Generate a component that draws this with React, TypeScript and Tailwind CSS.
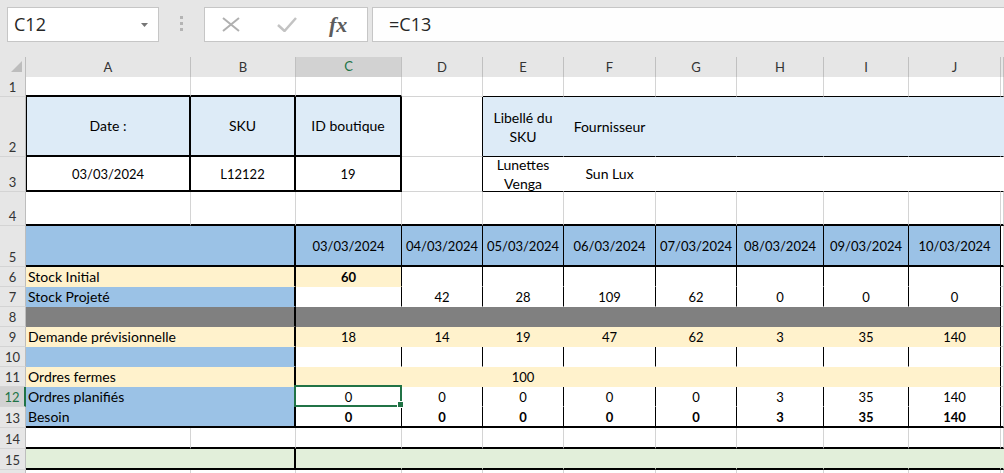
import type { ReactNode } from "react";

const COLS =
  "grid grid-cols-[26px_165px_105px_106px_81px_81px_92px_81px_87px_85px_92px_minmax(0,1fr)]";

const BOT = {
  g: "border-b border-b-[#d4d4d4]",
  k: "border-b border-b-black",
  K: "border-b-2 border-b-black",
  f: "border-b border-b-transparent",
};
const RGT = {
  g: "border-r border-r-[#d4d4d4]",
  k: "border-r border-r-black",
  K: "border-r-2 border-r-black",
  f: "border-r border-r-transparent",
};

type Cell = {
  b: keyof typeof BOT;
  r: keyof typeof RGT;
  bg?: string;
  span?: boolean;
  left?: boolean;
  bold?: boolean;
  wrap?: boolean;
  num?: boolean;
  sel?: boolean;
  x?: string;
  t?: ReactNode;
};

const LB = "bg-[#ddebf7]";
const MB = "bg-[#9bc2e6]";
const YE = "bg-[#fff2cc]";
const GR = "bg-[#808080]";
const GN = "bg-[#e2efda]";

const LETTERS = ["A", "B", "C", "D", "E", "F", "G", "H", "I", "J", ""];
const DATES = [
  "03/03/2024",
  "04/03/2024",
  "05/03/2024",
  "06/03/2024",
  "07/03/2024",
  "08/03/2024",
  "09/03/2024",
  "10/03/2024",
];

// cells C..J of the planning block
function block(
  vals: (string | number | null)[],
  bg: string,
  r: "k" | "f",
  b: "f" | "K" = "f",
  bold = false
): Cell[] {
  return vals.map((v, i) => ({
    b,
    r: i === 7 ? "k" : r,
    bg,
    bold,
    num: true,
    t: v,
  }));
}

const kCell = (b: keyof typeof BOT = "g"): Cell => ({ b, r: "g" });
const blank8 = [null, null, null, null, null, null, null, null];

function Row({
  n,
  h,
  cells,
  mid,
  selected,
}: {
  n?: number;
  h: string;
  cells: Cell[];
  mid?: boolean;
  selected?: boolean;
}) {
  return (
    <div className={`${COLS} ${h}`}>
      <div
        className={`flex items-end justify-center border-b border-b-[#d4d4d4] text-[13px] leading-[18px] ${
          selected
            ? "border-r-2 border-r-[#217346] bg-[#d2d2d2] text-[#217346]"
            : "border-r border-r-[#bdbdbd] bg-[#e6e6e6] text-[#333]"
        }`}
      >
        {n}
      </div>
      {cells.map((c, i) => (
        <div
          key={i}
          className={[
            "relative flex",
            c.sel ? "" : "overflow-hidden",
            mid || c.wrap ? "items-center" : "items-end",
            c.left ? "justify-start pl-[2px]" : "justify-center",
            c.wrap
              ? "whitespace-normal text-center leading-[19px]"
              : "whitespace-nowrap leading-[18px]",
            c.num ? "text-[13px]" : "",
            c.span ? "col-span-2" : "",
            c.bold ? "font-bold" : "",
            BOT[c.b],
            RGT[c.r],
            c.bg ?? "bg-white",
            c.x ?? "",
          ].join(" ")}
        >
          {c.t}
          {c.sel && (
            <>
              <div className="pointer-events-none absolute -top-[2px] -left-[2px] -right-[1px] -bottom-[1px] z-10 border-2 border-[#217346]" />
              <div className="absolute -right-[3px] -bottom-[2px] z-20 h-[7px] w-[7px] border border-white bg-[#217346]" />
            </>
          )}
        </div>
      ))}
    </div>
  );
}

function FormulaBar() {
  return (
    <div className="flex h-[57px] items-start bg-[#e6e6e6] pt-[7px] pl-[7px] font-['Open_Sans',sans-serif]">
      <div className="flex h-[35px] w-[152px] items-center justify-between border border-[#c6c6c6] bg-white pr-[10px] pl-[6px]">
        <span className="text-[18px] text-[#262626]">C12</span>
        <svg width="7" height="4" viewBox="0 0 7 4">
          <path d="M0 0h7L3.5 4z" fill="#767676" />
        </svg>
      </div>
      <div className="flex w-[45px] flex-col items-center gap-[3px] pt-[9px]">
        <span className="h-[3px] w-[3px] bg-[#b4b4b4]" />
        <span className="h-[3px] w-[3px] bg-[#b4b4b4]" />
        <span className="h-[3px] w-[3px] bg-[#b4b4b4]" />
      </div>
      <div className="flex h-[35px] w-[164px] items-center border border-[#c6c6c6] bg-white pl-[17px]">
        <svg width="18" height="15" viewBox="0 0 18 15">
          <path d="M1 1L17 14M17 1L1 14" stroke="#b0b0b0" strokeWidth="2" fill="none" />
        </svg>
        <svg className="ml-[37px]" width="20" height="15" viewBox="0 0 20 15">
          <path d="M1 8l6.5 6L19 1" stroke="#c3c3c3" strokeWidth="2.5" fill="none" />
        </svg>
        <span className="ml-[32px] font-['Liberation_Serif',serif] text-[22px] font-bold italic leading-none text-[#5c5c5c]">
          fx
        </span>
      </div>
      <div className="ml-[4px] flex h-[35px] flex-1 items-center border border-r-0 border-[#c6c6c6] bg-[#fefefe] pl-[16px] text-[18px] text-[#262626]">
        =C13
      </div>
    </div>
  );
}

export default function App() {
  const rest = (b: keyof typeof BOT, r: keyof typeof RGT, bg?: string) =>
    Array.from({ length: 6 }, () => ({ b, r, bg }) as Cell);

  return (
    <div className="h-[473px] w-[1004px] overflow-hidden bg-white font-['Lato',sans-serif] text-[14px] text-black">
      <FormulaBar />

      {/* column headers */}
      <div className={`${COLS} h-[20px] text-[13px]`}>
        <div className="border-r border-b border-r-[#bdbdbd] border-b-[#ababab] bg-[#e6e6e6]">
          <svg width="25" height="19" viewBox="0 0 25 19">
            <polygon points="11,15 22,4 22,15" fill="#bdbdbd" />
          </svg>
        </div>
        {LETTERS.map((l) => (
          <div
            key={l}
            className={`flex items-center justify-center border-r border-r-[#c0c0c0] ${
              l === "C"
                ? "border-b-2 border-b-[#217346] bg-[#d2d2d2] text-[#217346]"
                : "border-b border-b-[#ababab] bg-[#e6e6e6] text-[#333]"
            }`}
          >
            {l}
          </div>
        ))}
      </div>

      <Row
        n={1}
        h="h-[20px]"
        cells={[
          kCell("K"),
          kCell("K"),
          kCell("K"),
          kCell("g"),
          ...Array.from({ length: 7 }, () => kCell("k")),
        ]}
      />

      <Row
        n={2}
        h="h-[60px]"
        mid
        cells={[
          { b: "K", r: "K", bg: LB, x: "border-l border-l-black", t: "Date :" },
          { b: "K", r: "K", bg: LB, t: "SKU" },
          { b: "K", r: "K", bg: LB, t: "ID boutique" },
          { b: "g", r: "k" },
          { b: "k", r: "f", bg: LB, wrap: true, t: "Libellé du SKU" },
          { b: "k", r: "f", bg: LB, t: "Fournisseur" },
          ...rest("k", "f", LB),
        ].slice(0, 11)}
      />

      <Row
        n={3}
        h="h-[35px]"
        mid
        cells={[
          { b: "K", r: "K", num: true, x: "border-l border-l-black", t: "03/03/2024" },
          { b: "K", r: "K", num: true, t: "L12122" },
          { b: "K", r: "K", num: true, t: "19" },
          { b: "g", r: "k" },
          { b: "k", r: "f", wrap: true, t: "Lunettes Venga" },
          { b: "k", r: "f", t: "Sun Lux" },
          ...rest("k", "f"),
        ].slice(0, 11)}
      />

      <Row n={4} h="h-[34px]" cells={Array.from({ length: 11 }, () => kCell("K"))} />

      <Row
        n={5}
        h="h-[41px]"
        mid
        cells={[
          { b: "K", r: "K", bg: MB, span: true },
          ...DATES.map((d) => ({ b: "K", r: "k", bg: MB, num: true, t: d }) as Cell),
          kCell("K"),
        ]}
      />

      <Row
        n={6}
        h="h-[20px]"
        cells={[
          { b: "f", r: "K", bg: YE, span: true, left: true, t: "Stock Initial" },
          { b: "f", r: "k", bg: YE, bold: true, num: true, t: "60" },
          ...block(blank8.slice(1), "bg-white", "k").map((c) => ({
            ...c,
            r: "k" as const,
          })),
          kCell(),
        ]}
      />

      <Row
        n={7}
        h="h-[20px]"
        cells={[
          { b: "f", r: "K", bg: MB, span: true, left: true, t: "Stock Projeté" },
          ...block([null, 42, 28, 109, 62, 0, 0, 0], "bg-white", "k"),
          kCell(),
        ]}
      />

      <Row
        n={8}
        h="h-[20px]"
        cells={[
          { b: "f", r: "K", bg: GR, span: true },
          ...block(blank8, GR, "f"),
          kCell(),
        ]}
      />

      <Row
        n={9}
        h="h-[20px]"
        cells={[
          { b: "f", r: "K", bg: YE, span: true, left: true, t: "Demande prévisionnelle" },
          ...block([18, 14, 19, 47, 62, 3, 35, 140], YE, "f"),
          kCell(),
        ]}
      />

      <Row
        n={10}
        h="h-[20px]"
        cells={[
          { b: "f", r: "K", bg: MB, span: true },
          ...block(blank8, "bg-white", "k"),
          kCell(),
        ]}
      />

      <Row
        n={11}
        h="h-[20px]"
        cells={[
          { b: "f", r: "K", bg: YE, span: true, left: true, t: "Ordres fermes" },
          ...block([null, null, 100, null, null, null, null, null], YE, "f"),
          kCell(),
        ]}
      />

      <Row
        n={12}
        h="h-[20px]"
        selected
        cells={[
          { b: "f", r: "K", bg: MB, span: true, left: true, t: "Ordres planifiés" },
          ...block([0, 0, 0, 0, 0, 3, 35, 140], "bg-white", "k").map((c, i) =>
            i === 0 ? { ...c, sel: true } : c
          ),
          kCell(),
        ]}
      />

      <Row
        n={13}
        h="h-[21px]"
        cells={[
          { b: "K", r: "K", bg: MB, span: true, left: true, t: "Besoin" },
          ...block([0, 0, 0, 0, 0, 3, 35, 140], "bg-white", "k", "K", true),
          kCell("K"),
        ]}
      />

      <Row n={14} h="h-[21px]" cells={Array.from({ length: 11 }, () => kCell("K"))} />

      <Row
        n={15}
        h="h-[21px]"
        cells={[
          { b: "K", r: "K", bg: GN, span: true },
          ...block(blank8, GN, "f", "K").map((c) => ({ ...c, r: "f" as const })),
          { b: "K", r: "f", bg: GN },
        ]}
      />

      <Row h="h-[20px]" cells={Array.from({ length: 11 }, () => kCell("g"))} />
    </div>
  );
}
